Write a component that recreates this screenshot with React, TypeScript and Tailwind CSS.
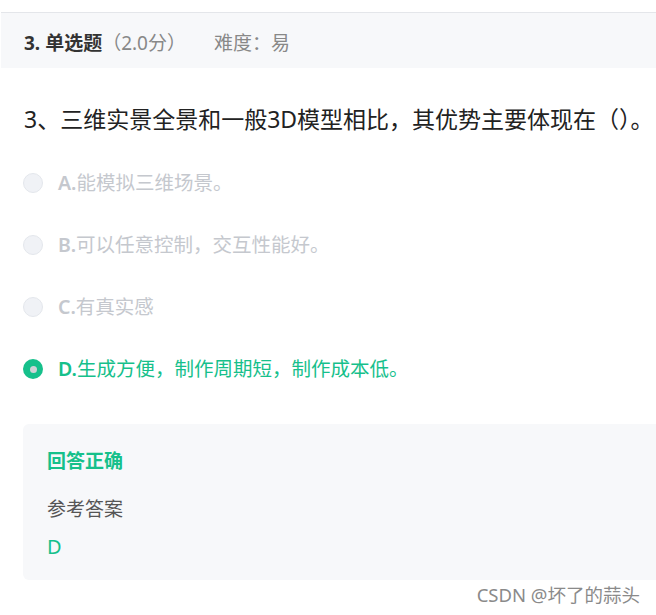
const options = [
  { key: "A", text: "能模拟三维场景。" },
  { key: "B", text: "可以任意控制，交互性能好。" },
  { key: "C", text: "有真实感" },
  { key: "D", text: "生成方便，制作周期短，制作成本低。" },
];

const picked = "D";

export default function App() {
  return (
    <div
      className="relative w-[656px] h-[615px] overflow-hidden bg-white"
      style={{ fontFamily: '"Noto Sans", "Noto Sans CJK SC", sans-serif' }}
    >
      <div className="mt-[12px] ml-[1px] h-[56px] border-t border-[#e4e6ea] bg-[#f7f8fa] pl-[23px] pt-[5px] flex items-center text-[19px] leading-none">
        <span className="font-bold text-[#333]">3. 单选题</span>
        <span className="text-[#888]">（2.0分）</span>
        <span className="ml-[28px] text-[#888]">难度：易</span>
      </div>

      <div className="mt-[36px] pl-[24px] h-[30px] flex items-center text-[23px] text-[#222] whitespace-nowrap">
        3、三维实景全景和一般3D模型相比，其优势主要体现在（）。
      </div>

      <ul className="mt-[18px]">
        {options.map((o) => {
          const on = o.key === picked;
          return (
            <li key={o.key} className="h-[62px] pl-[23px] flex items-center">
              {on ? (
                <span className="w-[20px] h-[20px] rounded-full bg-[#16c08b] flex items-center justify-center">
                  <span className="w-[7px] h-[7px] rounded-full bg-[#cfd3d6]" />
                </span>
              ) : (
                <span className="w-[20px] h-[20px] rounded-full bg-[#f0f2f6] border border-[#e4e7ec]" />
              )}
              <span
                className={
                  "ml-[15px] text-[19.5px] leading-none " +
                  (on ? "text-[#16c08b]" : "text-[#c5c8ce]")
                }
              >
                <span className="font-semibold">{o.key}.</span>
                {o.text}
              </span>
            </li>
          );
        })}
      </ul>

      <div className="mt-[24px] ml-[23px] -mr-[20px] h-[156px] rounded-[6px] bg-[#f7f8fa] pl-[24px] pt-[23px]">
        <div className="h-[28px] flex items-center text-[19px] font-bold text-[#16c08b]">回答正确</div>
        <div className="mt-[20px] h-[28px] flex items-center text-[19px] text-[#555]">参考答案</div>
        <div className="mt-[10px] h-[28px] flex items-center text-[20px] text-[#16c08b]">D</div>
      </div>

      <div
        className="absolute right-[16px] bottom-[6px] text-[18.5px] text-[#8a8a8a]"
        style={{ textShadow: "0 0 2px #fff" }}
      >
        CSDN @坏了的蒜头
      </div>
    </div>
  );
}
